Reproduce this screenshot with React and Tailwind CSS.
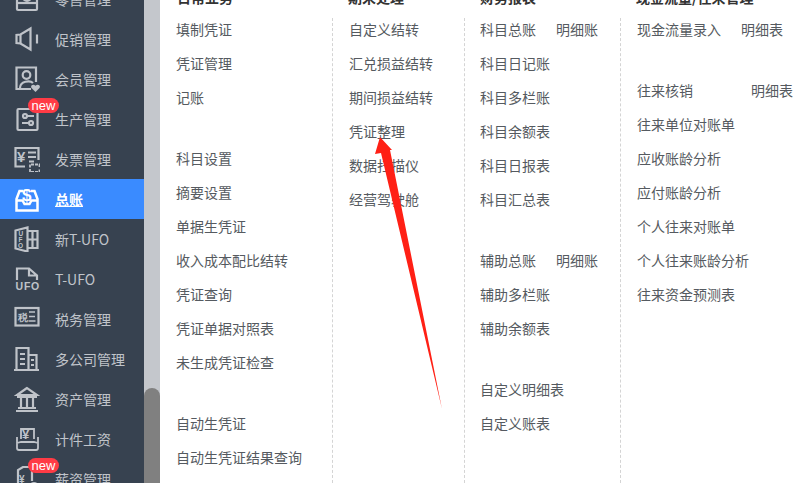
const S = ({ children, c = "#bfc3c9" }) => (
  <svg width="26" height="26" viewBox="0 0 26 26" fill="none" stroke={c} strokeWidth="2.200" className="shrink-0">{children}</svg>
);
const Txt = ({ x, y, s = 6, children, c = "#bfc3c9", w = 700, sp = 0 }) => (
  <text x={x} y={y} fontSize={s} fontWeight={w} fill={c} stroke="none" letterSpacing={sp} fontFamily="Liberation Sans, sans-serif">{children}</text>
);
const icons = {
  retail: <S><rect x="3" y="2" width="20" height="22" rx="1" /><circle cx="13" cy="11" r="4" /><path d="M3 17h20" /></S>,
  promo: <S><path d="M2.500 9v8l4 .5 10 6V2.500L6.500 8.500z" /><path d="M6.500 9v8M23 8.500v9" /></S>,
  member: <S><path d="M17 23H2.500V1.500h19.500V16" /><circle cx="12.500" cy="9" r="3.800" /><path d="M6 22c0-7 10-8 13-5" /><path d="M21.500 26l-4-4c-1.500-2.200 1.500-4.500 4-2.200 2.500-2.300 5.500 0 4 2.200z" fill="#bfc3c9" stroke="none" /></S>,
  prod: <S><rect x="3.500" y="3" width="20" height="21" rx="1" /><path d="M8 10h12M8 17h12" /><circle cx="11" cy="10" r="2" fill="#374250" /><circle cx="17" cy="17" r="2" fill="#374250" /></S>,
  invoice: <S><path d="M11 20.500H1.500V2h23v12" /><Txt x="3" y="16" s="15">¥</Txt><path d="M14 6.500h8M14 11h8M15 15.500h5" strokeWidth="1.800" /><path d="M16 21.500v-3h9.500v3M16 23v3h9.500v-3" strokeWidth="1.800" strokeDasharray="3 1" /></S>,
  gl: <S c="#fff"><path d="M9 5H5.500L2.500 13v11.500h21V13L20.500 5H17" strokeWidth="2.500" /><path d="M2.500 14.500h6l2 3.500h5l2-3.500h6" strokeWidth="2.500" /><Txt x="8" y="15" s="17" c="#fff">$</Txt></S>,
  nufo: <S><path d="M1.500 4.500l12-3v24l-12-3z" /><path d="M13.500 5h10v17h-10M18.500 5v17M13.500 13.500h10" /><Txt x="4.500" y="10" s="6.500">U</Txt><Txt x="4.500" y="16" s="6.500">F</Txt><Txt x="4" y="21.500" s="6.500">O</Txt></S>,
  ufo: <S><path d="M3 14V2.500h12l8 7V14M15 2.500V9.500h8" /><Txt x="1.500" y="24" s="10.500" sp="0.800" w="700">UFO</Txt></S>,
  tax: <S><rect x="1.500" y="2" width="23" height="17.500" /><Txt x="3.500" y="15" s="9.500" w="700">税</Txt><path d="M15 6h6M15 10.500h6M14.500 15h7" strokeWidth="1.600" /></S>,
  multi: <S><path d="M2.500 24V2h12v22M14.500 9h8v15M0 24h25" /><path d="M6 8h5M6 13h5M6 18h5M17 14h3M17 19h3" /></S>,
  asset: <S><path d="M13 2L3 9h20zM3 11h20M7 12v9M13 12v9M19 12v9M4 22h18M2 25h22" /></S>,
  piece: <S><path d="M7 13V3h13v10M3 11v11c0 1 1 2 2 2h17c1 0 2-1 2-2V11M3 17l4-1h13l4 1" strokeWidth="1.800" /><Txt x="8" y="13" s="13">¥</Txt></S>,
  salary: <S><path d="M4 24V4l5-3h9v14" /><Txt x="5" y="17" s="10">¥</Txt><circle cx="20" cy="21" r="4" /></S>,
};
const side = [
  ["retail", "零售管理"], ["promo", "促销管理"], ["member", "会员管理"], ["prod", "生产管理", true], ["invoice", "发票管理"],
  ["gl", "总账", false, true], ["nufo", "新T-UFO"], ["ufo", "T-UFO"], ["tax", "税务管理"], ["multi", "多公司管理"],
  ["asset", "资产管理"], ["piece", "计件工资"], ["salary", "薪资管理", true],
];
const columns = [
  { title: "日常业务", w: "w-[173px]", pl: "pl-[17px]", first: true, groups: [
    [["填制凭证"], ["凭证管理"], ["记账"]],
    [["科目设置"], ["摘要设置"], ["单据生凭证"], ["收入成本配比结转"], ["凭证查询"], ["凭证单据对照表"], ["未生成凭证检查"]],
    [["自动生凭证"], ["自动生凭证结果查询"]],
  ]},
  { title: "期末处理", w: "w-[132px]", pl: "pl-[16px]", groups: [
    [["自定义结转"], ["汇兑损益结转"], ["期间损益结转"], ["凭证整理"], ["数据扫描仪"], ["经营驾驶舱"]],
  ]},
  { title: "财务报表", w: "w-[156px]", pl: "pl-[15px]", groups: [
    [["科目总账", "明细账", "ml-[20px]"], ["科目日记账"], ["科目多栏账"], ["科目余额表"], ["科目日报表"], ["科目汇总表"]],
    [["辅助总账", "明细账", "ml-[20px]"], ["辅助多栏账"], ["辅助余额表"]],
    [["自定义明细表"], ["自定义账表"]],
  ]},
  { title: "现金流量/往来管理", w: "w-[185px]", pl: "pl-[16px]", groups: [
    [["现金流量录入", "明细表", "ml-[20px]"]],
    [["往来核销", "明细表", "ml-[58px]"], ["往来单位对账单"], ["应收账龄分析"], ["应付账龄分析"], ["个人往来对账单"], ["个人往来账龄分析"], ["往来资金预测表"]],
  ]},
];
export default function App() {
  return (
    <div className="relative flex h-[483px] w-[805px] overflow-hidden bg-white text-[14px] font-['Noto_Sans_CJK_SC','Liberation_Sans',sans-serif]">
      <aside className="h-full w-[144px] shrink-0 bg-[#374250]">
        <div className="mt-[-21px] flex flex-col">
          {side.map(([ic, label, isNew, active]) => (
            <div key={label} className={`relative flex h-[40px] items-center pl-[14px] ${active ? "bg-[#3a8bff] font-bold text-white" : "text-[#c0c4ca]"}`}>
              {icons[ic]}
              <span className={`ml-[15px] ${active ? "underline" : ""}`}>{label}</span>
              {isNew && (
                <span className="absolute left-[28px] top-[-1px] flex h-[15px] w-[31px] items-center justify-center rounded-full bg-[#ff3b45] text-[13px] font-normal leading-none text-white font-['Liberation_Sans',sans-serif]">new</span>
              )}
            </div>
          ))}
        </div>
      </aside>
      <div className="flex h-full w-[16px] shrink-0 flex-col bg-[#c4c7cc] pt-[388px]">
        <div className="h-[95px] rounded-t-full bg-[#808080]" />
      </div>
      <main className="ml-[-1px] flex h-full flex-1 text-[#555a60]">
        {columns.map((col) => (
          <section key={col.title} className={`${col.w} flex h-full shrink-0 flex-col`}>
            <h3 className={`${col.first ? "pl-[18px]" : "pl-[16px]"} mt-[-14px] h-[32px] shrink-0 text-[14px] font-bold leading-[22px] text-[#333]`}>{col.title}</h3>
            <div className={`flex-1 ${col.first ? "" : "border-l border-dashed border-[#d4d4d4]"} ${col.pl}`}>
              {col.groups.map((g, i) => (
                <div key={i} className={`flex flex-col gap-[12px] ${i ? "mt-[39px]" : ""}`}>
                  {g.map(([a, b, ml]) => (
                    <div key={a} className="flex h-[22px] items-center whitespace-nowrap leading-[22px]">
                      <span>{a}</span>
                      {b && <span className={ml}>{b}</span>}
                    </div>
                  ))}
                </div>
              ))}
            </div>
          </section>
        ))}
      </main>
      <svg className="pointer-events-none absolute left-0 top-0" width="805" height="483" viewBox="0 0 805 483">
        <polygon points="380,137 392,150 390,150 442,409 381,153 375,154" fill="#ff2015" />
      </svg>
    </div>
  );
}
